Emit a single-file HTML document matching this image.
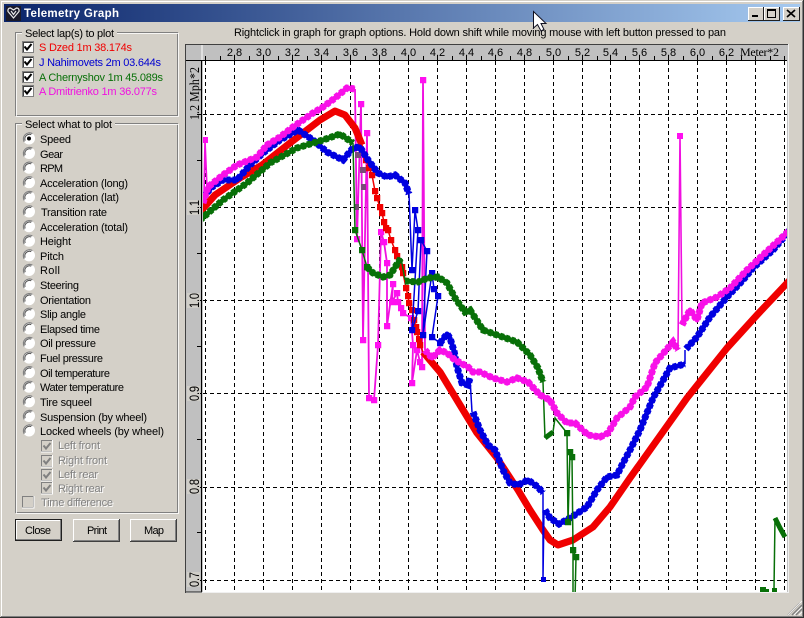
<!DOCTYPE html>
<html>
<head>
<meta charset="utf-8">
<title>Telemetry Graph</title>
<style>
html,body{margin:0;padding:0;background:#d4d0c8;width:804px;height:618px;overflow:hidden}
svg{display:block;position:absolute;left:0;top:0}
text{font-family:"Liberation Sans",Arial,sans-serif;font-size:11px;fill:#000}
.d{fill:#808080}
.s{fill:#fff}
.t{fill:none;stroke-width:5;stroke-linejoin:round}
.o{fill:none;stroke-width:7;stroke-dasharray:4 2}
</style>
</head>
<body>
<svg width="804" height="618" viewBox="0 0 804 618" xmlns="http://www.w3.org/2000/svg">
<defs>
<linearGradient id="tb" x1="0" x2="1" y1="0" y2="0">
<stop offset="0" stop-color="#0a246a"/><stop offset="1" stop-color="#a6caf0"/>
</linearGradient>
<marker id="mr" markerUnits="userSpaceOnUse" markerWidth="8" markerHeight="8" refX="3.25" refY="3.25"><rect width="6.5" height="6.5" fill="#f00000"/></marker>
<marker id="mb" markerUnits="userSpaceOnUse" markerWidth="8" markerHeight="8" refX="3.25" refY="3.25"><rect width="6.5" height="6.5" fill="#0000e0"/></marker>
<marker id="mg" markerUnits="userSpaceOnUse" markerWidth="8" markerHeight="8" refX="3.25" refY="3.25"><rect width="6.5" height="6.5" fill="#087008"/></marker>
<marker id="mm" markerUnits="userSpaceOnUse" markerWidth="8" markerHeight="8" refX="3.25" refY="3.25"><rect width="6.5" height="6.5" fill="#ff10f0"/></marker>
<g id="rad">
<circle cx="0" cy="0" r="6" fill="#fff"/>
<path d="M-4.8 3.4 A6 6 0 0 1 3.4 -4.8" fill="none" stroke="#808080" stroke-width="1.2"/>
<path d="M-3.8 2.2 A4.6 4.6 0 0 1 2.2 -3.8" fill="none" stroke="#505050" stroke-width="1"/>
</g>
<g id="chk">
<rect x="0.5" y="0.5" width="11" height="11" fill="#fff" stroke="#808080"/>
<path d="M1.5 11 V1.5 H11" fill="none" stroke="#404040"/>
<path d="M2.5 5.5 L5 8.5 L9.5 3" fill="none" stroke="#000" stroke-width="2"/>
</g>
<g id="chd">
<rect x="0.5" y="0.5" width="11" height="11" fill="#d4d0c8" stroke="#808080"/>
<path d="M11.5 0 V12 H0" fill="none" stroke="#fff"/>
<path d="M2.5 5.5 L5 8.5 L9.5 3" fill="none" stroke="#808080" stroke-width="2"/>
</g>
<clipPath id="plot"><rect x="203" y="61" width="584" height="531"/></clipPath>
</defs>

<!-- window -->
<rect width="804" height="618" fill="#d4d0c8"/>
<path d="M1.5 618 V1.5 H802" fill="none" stroke="#fff"/>
<path d="M802.5 1 V616.5 H1" fill="none" stroke="#808080"/>
<path d="M803.5 0 V617.5 H0" fill="none" stroke="#303030"/>
<rect x="4" y="4" width="796" height="18" fill="url(#tb)"/>
<!-- title icon -->
<rect x="6" y="6" width="15" height="15" fill="#1a1a2a"/>
<path d="M13.5 18 L8 11.5 Q7.5 8 10.5 8 L13.5 10 L16.5 8 Q19.5 8 19 11.5 Z M11 11 L13.5 14.5 L16 11" fill="none" stroke="#e8e8e8" stroke-width="1.2"/>
<text x="24" y="17" textLength="95" style="fill:#fff;font-weight:bold;font-size:11.5px">Telemetry Graph</text>
<!-- title buttons -->
<g>
<rect x="748" y="7" width="15" height="13" fill="#d4d0c8"/><path d="M748.5 20 V7.5 H763" fill="none" stroke="#fff"/><path d="M763.5 7 V20.5 H748" fill="none" stroke="#202020"/>
<rect x="752" y="15" width="6" height="2" fill="#000"/>
<rect x="764" y="7" width="15" height="13" fill="#d4d0c8"/><path d="M764.5 20 V7.5 H779" fill="none" stroke="#fff"/><path d="M779.5 7 V20.5 H764" fill="none" stroke="#202020"/>
<rect x="767.5" y="9.5" width="8" height="8" fill="none" stroke="#000"/><rect x="767" y="9" width="9" height="2" fill="#000"/>
<rect x="783" y="7" width="16" height="13" fill="#d4d0c8"/><path d="M783.5 20 V7.5 H799" fill="none" stroke="#fff"/><path d="M799.5 7 V20.5 H783" fill="none" stroke="#202020"/>
<path d="M787 10 L795 17 M795 10 L787 17" stroke="#000" stroke-width="1.7"/>
</g>

<!-- hint -->
<text x="234" y="36" textLength="492">Rightclick in graph for graph options. Hold down shift while moving mouse with left button pressed to pan</text>

<!-- group boxes -->
<rect x="15.5" y="32.5" width="162" height="83" fill="none" stroke="#808080"/>
<rect x="16.5" y="33.5" width="162" height="83" fill="none" stroke="#fff" opacity=".8"/>
<rect x="22" y="28" width="95" height="12" fill="#d4d0c8"/>
<text x="25" y="37" textLength="89">Select lap(s) to plot</text>
<use href="#chk" x="22" y="41"/><text x="39" y="51" textLength="93" style="fill:#f00000">S Dzed 1m 38.174s</text>
<use href="#chk" x="22" y="56"/><text x="39" y="66" textLength="122" style="fill:#0000d0">J Nahimovets 2m 03.644s</text>
<use href="#chk" x="22" y="71"/><text x="39" y="81" textLength="124" style="fill:#087008">A Chernyshov 1m 45.089s</text>
<use href="#chk" x="22" y="85"/><text x="39" y="95" textLength="118" style="fill:#f010e0">A Dmitrienko 1m 36.077s</text>

<rect x="15.5" y="123.5" width="162" height="389" fill="none" stroke="#808080"/>
<rect x="16.5" y="124.5" width="162" height="389" fill="none" stroke="#fff" opacity=".8"/>
<rect x="22" y="118" width="93" height="12" fill="#d4d0c8"/>
<text x="25" y="128" textLength="87">Select what to plot</text>

<use href="#rad" x="29" y="138.5"/><circle cx="29" cy="138.5" r="2" fill="#000"/>
<text x="40" y="143" textLength="31">Speed</text>
<use href="#rad" x="29" y="153"/><text x="40" y="158" textLength="23">Gear</text>
<use href="#rad" x="29" y="167.7"/><text x="40" y="172" textLength="23">RPM</text>
<use href="#rad" x="29" y="182.3"/><text x="40" y="187" textLength="88">Acceleration (long)</text>
<use href="#rad" x="29" y="197"/><text x="40" y="201" textLength="79">Acceleration (lat)</text>
<use href="#rad" x="29" y="211.5"/><text x="41" y="216" textLength="66">Transition rate</text>
<use href="#rad" x="29" y="226.2"/><text x="40" y="231" textLength="88">Acceleration (total)</text>
<use href="#rad" x="29" y="240.8"/><text x="40" y="245" textLength="31">Height</text>
<use href="#rad" x="29" y="255.4"/><text x="40" y="260" textLength="24">Pitch</text>
<use href="#rad" x="29" y="270"/><text x="40" y="274" textLength="20">Roll</text>
<use href="#rad" x="29" y="284.6"/><text x="40" y="289" textLength="39">Steering</text>
<use href="#rad" x="29" y="299.2"/><text x="40" y="304" textLength="51">Orientation</text>
<use href="#rad" x="29" y="313.8"/><text x="40" y="318" textLength="46">Slip angle</text>
<use href="#rad" x="29" y="328.4"/><text x="40" y="333" textLength="60">Elapsed time</text>
<use href="#rad" x="29" y="343"/><text x="40" y="347" textLength="56">Oil pressure</text>
<use href="#rad" x="29" y="357.6"/><text x="40" y="362" textLength="63">Fuel pressure</text>
<use href="#rad" x="29" y="372.2"/><text x="40" y="377" textLength="70">Oil temperature</text>
<use href="#rad" x="29" y="386.8"/><text x="40" y="391" textLength="84">Water temperature</text>
<use href="#rad" x="29" y="401.4"/><text x="40" y="406" textLength="52">Tire squeel</text>
<use href="#rad" x="29" y="416"/><text x="40" y="421" textLength="107">Suspension (by wheel)</text>
<use href="#rad" x="29" y="430.5"/><text x="40" y="435" textLength="124">Locked wheels (by wheel)</text>

<use href="#chd" x="41" y="440"/>
<text x="59" y="450" textLength="42" class="s">Left front</text><text x="58" y="449" textLength="42" class="d">Left front</text>
<use href="#chd" x="41" y="455"/>
<text x="59" y="465" textLength="49" class="s">Right front</text><text x="58" y="464" textLength="49" class="d">Right front</text>
<use href="#chd" x="41" y="469"/>
<text x="59" y="479" textLength="40" class="s">Left rear</text><text x="58" y="478" textLength="40" class="d">Left rear</text>
<use href="#chd" x="41" y="482"/>
<text x="59" y="493" textLength="46" class="s">Right rear</text><text x="58" y="492" textLength="46" class="d">Right rear</text>
<rect x="22.5" y="496.5" width="11" height="11" fill="#d4d0c8" stroke="#808080"/><path d="M34 496 V508 H22" fill="none" stroke="#fff"/>
<text x="42" y="507" textLength="72" class="s">Time difference</text><text x="41" y="506" textLength="72" class="d">Time difference</text>

<!-- buttons -->
<rect x="15" y="519" width="47" height="22" fill="#202020"/>
<rect x="16" y="520" width="45" height="20" fill="#d4d0c8"/>
<path d="M16.5 539 V520.5 H60" fill="none" stroke="#fff"/><path d="M60.5 520 V539.5 H16" fill="none" stroke="#808080"/>
<text x="25" y="534" textLength="26">Close</text>
<path d="M73.5 541 V519.5 H119" fill="none" stroke="#fff"/><path d="M119.5 519 V541.5 H73" fill="none" stroke="#404040"/><path d="M118.5 520 V540.5 H74" fill="none" stroke="#808080"/>
<text x="87" y="534" textLength="20">Print</text>
<path d="M130.5 541 V519.5 H176" fill="none" stroke="#fff"/><path d="M176.5 519 V541.5 H130" fill="none" stroke="#404040"/><path d="M175.5 520 V540.5 H131" fill="none" stroke="#808080"/>
<text x="144" y="534" textLength="20">Map</text>

<!-- graph frame -->
<rect x="185" y="44" width="603" height="549" fill="#c0c0c0"/>
<path d="M185.5 593 V44.5 H788" fill="none" stroke="#404040"/>
<path d="M186 592.5 H788.5 V44" fill="none" stroke="#f0f0f0"/>
<rect x="203" y="61" width="584" height="531" fill="#fff"/>
<path d="M186 60.5 H787" stroke="#000"/>
<path d="M202 45 V60" stroke="#fff"/>
<path d="M201.5 61 V592" stroke="#000"/>
<path d="M186 592 H202" stroke="#202020"/>

<!-- x ticks -->
<path stroke="#000" d="M205.5 56V61M220.5 56V61M234.5 56V61M249.5 56V61M263.5 56V61M278.5 56V61M292.5 56V61M307.5 56V61M321.5 56V61M336.5 56V61M350.5 56V61M365.5 56V61M379.5 56V61M394.5 56V61M408.5 56V61M423.5 56V61M437.5 56V61M452.5 56V61M466.5 56V61M481.5 56V61M495.5 56V61M510.5 56V61M524.5 56V61M539.5 56V61M553.5 56V61M568.5 56V61M582.5 56V61M597.5 56V61M610.5 56V61M625.5 56V61M639.5 56V61M654.5 56V61M668.5 56V61M683.5 56V61M697.5 56V61M712.5 56V61M726.5 56V61M741.5 56V61M755.5 56V61M770.5 56V61M784.5 56V61"/>
<!-- y ticks -->
<path stroke="#000" d="M197 114.5H202M197 160.5H202M197 207.5H202M197 253.5H202M197 300.5H202M197 346.5H202M197 393.5H202M197 439.5H202M197 487.5H202M197 532.5H202M197 580.5H202"/>

<!-- x labels -->
<g text-anchor="middle">
<text x="234.5" y="56">2.8</text><text x="263.5" y="56">3.0</text><text x="292.5" y="56">3.2</text><text x="321.5" y="56">3.4</text><text x="350.5" y="56">3.6</text><text x="379.5" y="56">3.8</text><text x="408.5" y="56">4.0</text><text x="437.5" y="56">4.2</text><text x="466.5" y="56">4.4</text><text x="495.5" y="56">4.6</text><text x="524.5" y="56">4.8</text><text x="553.5" y="56">5.0</text><text x="582.5" y="56">5.2</text><text x="610.5" y="56">5.4</text><text x="639.5" y="56">5.6</text><text x="668.5" y="56">5.8</text><text x="697.5" y="56">6.0</text><text x="726.5" y="56">6.2</text>
</g>
<text x="740" y="56" textLength="39" style='font-family:"Liberation Serif",serif;font-size:12px'>Meter*2</text>
<!-- y labels -->
<rect x="187" y="200" width="13" height="15" fill="#d0cec8"/><rect x="187" y="293" width="13" height="15" fill="#d0cec8"/><rect x="187" y="386" width="13" height="15" fill="#d0cec8"/><rect x="187" y="479" width="13" height="15" fill="#d0cec8"/><rect x="187" y="572" width="13" height="15" fill="#d0cec8"/>
<text transform="translate(199,120) rotate(-90) scale(1,1.15)" textLength="53" style='font-family:"Liberation Serif",serif;font-size:12px'>1.2 Mph*2</text>
<text transform="translate(199,215) rotate(-90) scale(1,1.25)" textLength="15">1.1</text>
<text transform="translate(199,308) rotate(-90) scale(1,1.25)" textLength="15">1.0</text>
<text transform="translate(199,401) rotate(-90) scale(1,1.25)" textLength="15">0.9</text>
<text transform="translate(199,494) rotate(-90) scale(1,1.25)" textLength="15">0.8</text>
<text transform="translate(199,587) rotate(-90) scale(1,1.25)" textLength="15">0.7</text>

<!-- plot -->
<g clip-path="url(#plot)">
<path stroke="#000" stroke-dasharray="4 3" d="M205.5 61V592M234.5 61V592M263.5 61V592M292.5 61V592M321.5 61V592M350.5 61V592M379.5 61V592M408.5 61V592M437.5 61V592M466.5 61V592M495.5 61V592M524.5 61V592M553.5 61V592M582.5 61V592M610.5 61V592M639.5 61V592M668.5 61V592M697.5 61V592M726.5 61V592M755.5 61V592M784.5 61V592"/>
<path stroke="#000" stroke-dasharray="4 3" d="M203 114.5H787M203 207.5H787M203 300.5H787M203 393.5H787M203 487.5H787M203 580.5H787"/>

<!-- magenta sparse -->
<polyline fill="none" stroke="#f010e0" stroke-width="1.8" marker-mid="url(#mm)" points="355,89 357,239 361,104 363,340 367,133 369,398 374,400 378,345 381,232 384,242 387,263 387,326 393,284 392,302 397,293 398,302 401,308 403,313 411,318 413,345 412,383 417,350 420,362 422,367 423,80 425,350"/>
<polyline fill="none" stroke="#f010e0" stroke-width="1.6" points="204,195 205,140 207,188"/>
<rect x="202" y="137" width="6" height="6" fill="#ff10f0"/>
<!-- muddy overlap markers -->
<g fill="#7a4a78"><rect x="355" y="152" width="6" height="6"/><rect x="360" y="167" width="6" height="6"/><rect x="361" y="184" width="5" height="6"/><rect x="354" y="204" width="5" height="6"/></g>

<!-- red -->
<polyline fill="none" stroke="#f00000" stroke-width="7" stroke-linejoin="round" points="200,212 215,195 240,178 262,165 290,143 320,120 335,111 345,115 355,128 362,145"/>
<polyline fill="none" stroke="#f00000" stroke-width="1.5" marker-mid="url(#mr)" points="362,145 366,160 369,168 372,175 375,191 377,198 380,207 382,213 384,222 386,228 388,230 391,240 395,250 397,256 402,267 403,273 406,288 408,296 409,303 412,310 414,320 416,327 417,332 419,339 420,345 423,352"/>
<polyline fill="none" stroke="#f00000" stroke-width="7" stroke-linejoin="round" points="423,352 440,372 460,405 477,433 497,458 518,490 530,510 543,530 550,540 558,545 573,540 593,527 610,507 630,478 687,398 727,348 757,315 790,280"/>

<!-- blue -->
<polyline class="t" stroke="#0000e0" points="203,197 212,187 223,180 237,180 250,165 263,153 280,140 298,130 313,140 327,152 343,160 353,148 360,147 368,160 378,173 387,177 395,175 405,183 409,194"/>
<polyline class="o" stroke="#0000e0" points="203,197 212,187 223,180 237,180 250,165 263,153 280,140 298,130 313,140 327,152 343,160 353,148 360,147 368,160 378,173 387,177 395,175 405,183 409,194"/>
<polyline fill="none" stroke="#0000e0" stroke-width="1.5" marker-mid="url(#mb)" marker-end="url(#mb)" points="409,194 412,270 415,210 418,230 412,330 418,311 421,240 427,251 423,335 432,273 434,289 438,296 432,337 440,343"/>
<polyline class="t" stroke="#0000e0" points="440,343 447,334 450,338 454,351 457,367 462,383 468,385 470,378"/>
<polyline class="o" stroke="#0000e0" points="440,343 447,334 450,338 454,351 457,367 462,383 468,385 470,378"/>
<polyline fill="none" stroke="#0000e0" stroke-width="1.5" points="470,378 472,412"/>
<polyline class="t" stroke="#0000e0" points="473,412 480,430 488,445 495,450 503,470 510,483 518,485 528,480 538,487 543,493"/>
<polyline class="o" stroke="#0000e0" points="473,412 480,430 488,445 495,450 503,470 510,483 518,485 528,480 538,487 543,493"/>
<polyline fill="none" stroke="#0000e0" stroke-width="1.5" points="543,493 543,579 544,510"/>
<rect x="541" y="577" width="5" height="5" fill="#0000e0"/>
<polyline class="t" stroke="#0000e0" points="545,510 550,518 559,524 570,518 587,507 597,490 607,477 617,475 623,463 630,450 640,430 653,398 670,368 685,364"/>
<polyline class="o" stroke="#0000e0" points="545,510 550,518 559,524 570,518 587,507 597,490 607,477 617,475 623,463 630,450 640,430 653,398 670,368 685,364"/>
<polyline fill="none" stroke="#0000e0" stroke-width="1.5" points="685,364 685,350"/>
<polyline class="t" stroke="#0000e0" points="686,349 697,337 710,317 727,297 743,280 753,268 773,250 790,230"/>
<polyline class="o" stroke="#0000e0" points="686,349 697,337 710,317 727,297 743,280 753,268 773,250 790,230"/>

<!-- green -->
<polyline class="t" stroke="#087008" points="200,220 223,200 247,183 270,163 297,148 323,140 340,134 353,143"/>
<polyline class="o" stroke="#087008" points="200,220 223,200 247,183 270,163 297,148 323,140 340,134 353,143"/>
<polyline fill="none" stroke="#087008" stroke-width="1.5" marker-mid="url(#mg)" marker-end="url(#mg)" points="353,143 355,230 362,250 367,267"/>
<polyline class="t" stroke="#087008" points="367,267 373,273 383,277 390,275 401,258"/>
<polyline class="o" stroke="#087008" points="367,267 373,273 383,277 390,275 401,258"/>
<polyline fill="none" stroke="#087008" stroke-width="1.5" points="401,258 405,280"/>
<polyline class="t" stroke="#087008" points="405,281 418,282 428,278 438,277 447,283 455,298 465,312 470,310 483,330 497,335 517,342 530,355 538,368 543,382"/>
<polyline class="o" stroke="#087008" points="405,281 418,282 428,278 438,277 447,283 455,298 465,312 470,310 483,330 497,335 517,342 530,355 538,368 543,382"/>
<polyline fill="none" stroke="#087008" stroke-width="1.5" points="543,382 545,438"/>
<polyline fill="none" stroke="#087008" stroke-width="5" points="545,438 553,432"/>
<polyline fill="none" stroke="#087008" stroke-width="1.5" marker-end="url(#mg)" points="553,432 555,418 567,433"/>
<polyline fill="none" stroke="#087008" stroke-width="1.5" marker-mid="url(#mg)" points="567,433 568,522 570,452 572,457 573,550 576,557 575,600"/>
<polyline fill="none" stroke="#087008" stroke-width="1.5" points="573,550 573,600"/>
<polyline fill="none" stroke="#087008" stroke-width="5" stroke-linejoin="round" points="775,518 780,528 785,537"/>
<polyline fill="none" stroke="#087008" stroke-width="1.5" points="775,518 774,589"/>
<rect x="760" y="587" width="6" height="5" fill="#087008"/><rect x="765" y="589" width="4" height="3" fill="#087008"/><rect x="772" y="588" width="5" height="4" fill="#087008"/>

<!-- magenta thick -->
<polyline class="t" stroke="#f810e8" points="203,203 208,187 223,175 237,165 257,157 267,145 280,137 293,127 313,113 323,107 335,98 347,88 355,89"/>
<polyline class="o" stroke="#f810e8" points="203,203 208,187 223,175 237,165 257,157 267,145 280,137 293,127 313,113 323,107 335,98 347,88 355,89"/>
<polyline class="t" stroke="#f810e8" points="425,350 432,358 440,350 447,353 455,360 468,367 473,372 480,372 493,378 507,382 517,378 528,382 540,395 550,400 557,413 567,423 575,423 588,435 600,437 608,433 617,418 630,407 635,397 647,387 655,363 673,342 678,350"/>
<polyline class="o" stroke="#f810e8" points="425,350 432,358 440,350 447,353 455,360 468,367 473,372 480,372 493,378 507,382 517,378 528,382 540,395 550,400 557,413 567,423 575,423 588,435 600,437 608,433 617,418 630,407 635,397 647,387 655,363 673,342 678,350"/>
<polyline fill="none" stroke="#f010e0" stroke-width="1.6" points="678,350 680,135 682,325"/>
<rect x="677" y="133" width="6" height="6" fill="#ff10f0"/>
<polyline class="t" stroke="#f810e8" points="682,325 690,310 697,320 702,303 717,297 730,288 747,270 763,255 790,230"/>
<polyline class="o" stroke="#f810e8" points="682,325 690,310 697,320 702,303 717,297 730,288 747,270 763,255 790,230"/>
</g>

<!-- resize grip -->
<path d="M800 603 L788 615 M802 605 L792 615 M802 609 L796 615" stroke="#808080" stroke-width="1.5"/>
<path d="M802 601 L788 615 M802 607 L794 615 M802 612 L799 615" stroke="#fff" stroke-width=".8"/>

<!-- cursor -->
<path d="M533.5 11.5 V28 L537.5 24.5 L541 31 L544 29.5 L541 23.5 H546 Z" fill="#fff" stroke="#101020" stroke-width="1"/>
</svg>
</body>
</html>
